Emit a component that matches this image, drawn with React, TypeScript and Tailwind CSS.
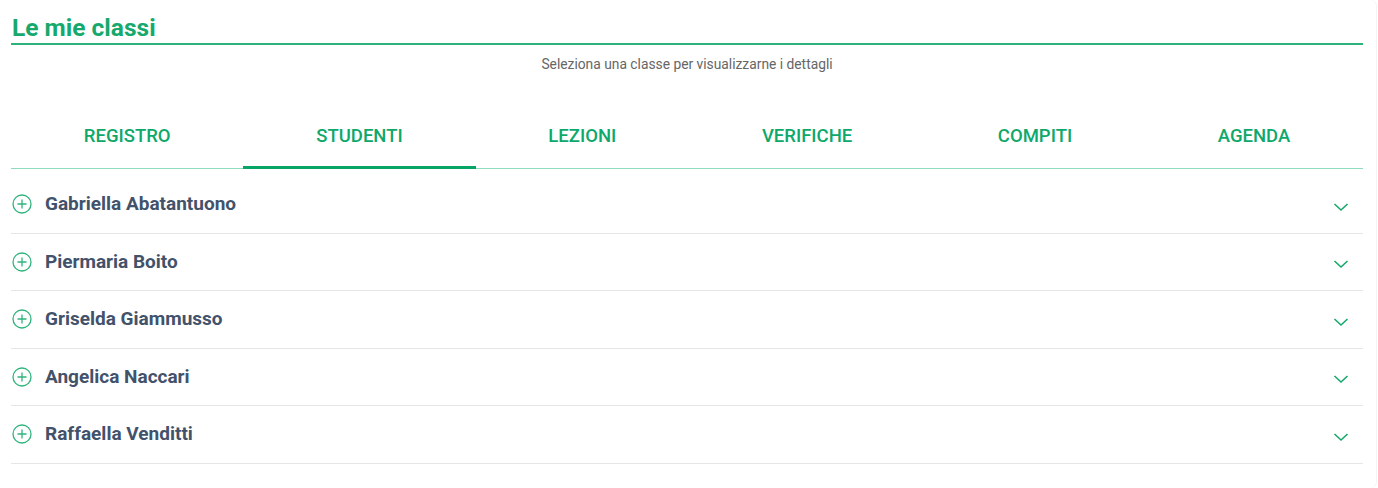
import React, { useState } from 'react';

const tabs = ['REGISTRO', 'STUDENTI', 'LEZIONI', 'VERIFICHE', 'COMPITI', 'AGENDA'];

const students = [
  'Gabriella Abatantuono',
  'Piermaria Boito',
  'Griselda Giammusso',
  'Angelica Naccari',
  'Raffaella Venditti',
];

const PlusCircle = () => (
  <svg width="20" height="20" viewBox="0 0 20 20" fill="none" stroke="#2fb47c" strokeWidth="1.3">
    <circle cx="10" cy="10" r="9" />
    <path d="M10 5.5v9M5.5 10h9" />
  </svg>
);

const Chevron = () => (
  <svg width="16" height="10" viewBox="0 0 16 10" fill="none" stroke="#14a96b" strokeWidth="1.6">
    <path d="M1.5 2l6.5 6 6.5-6" />
  </svg>
);

export default function App() {
  const [active, setActive] = useState(1);

  return (
    <div
      className="h-[488px] w-[1377px] bg-white border-r border-gray-100 rounded-r-md"
      style={{ fontFamily: 'Roboto, "Liberation Sans", sans-serif' }}
    >
      <div className="ml-[11px] w-[1352px] pt-[14px]">
        <h1 className="text-[24.5px] leading-[28px] font-bold text-[#16a96d] pl-[1px]">Le mie classi</h1>
        <div className="mt-[1px] h-[2px] bg-[#2bb37b]" />
        <p className="mt-[10px] text-center text-[13.8px] leading-[18px] text-[#666]">
          Seleziona una classe per visualizzarne i dettagli
        </p>

        <div className="mt-[46px] flex border-b border-b-[#8fdcbf]">
          {tabs.map((t, i) => (
            <button
              key={t}
              onClick={() => setActive(i)}
              className="flex-auto relative h-[49px] flex items-start justify-center pt-[5px] text-[18.5px] leading-[24px] font-medium text-[#0ea86b]"
            >
              {t}
              {i === active && <span className="absolute left-0 right-0 -bottom-[1px] h-[3px] bg-[#06a566]" />}
            </button>
          ))}
        </div>

        <div className="pt-[7px]">
          {students.map((s) => (
            <div key={s} className="h-[57.5px] flex items-center border-b border-[#e6e6e6]">
              <div className="w-[34px] pl-[1px] flex items-center">
                <PlusCircle />
              </div>
              <span className="flex-1 text-[19px] font-bold text-[#42526b]">{s}</span>
              <div className="pr-[14px] pt-[5px]">
                <Chevron />
              </div>
            </div>
          ))}
        </div>
      </div>
    </div>
  );
}
